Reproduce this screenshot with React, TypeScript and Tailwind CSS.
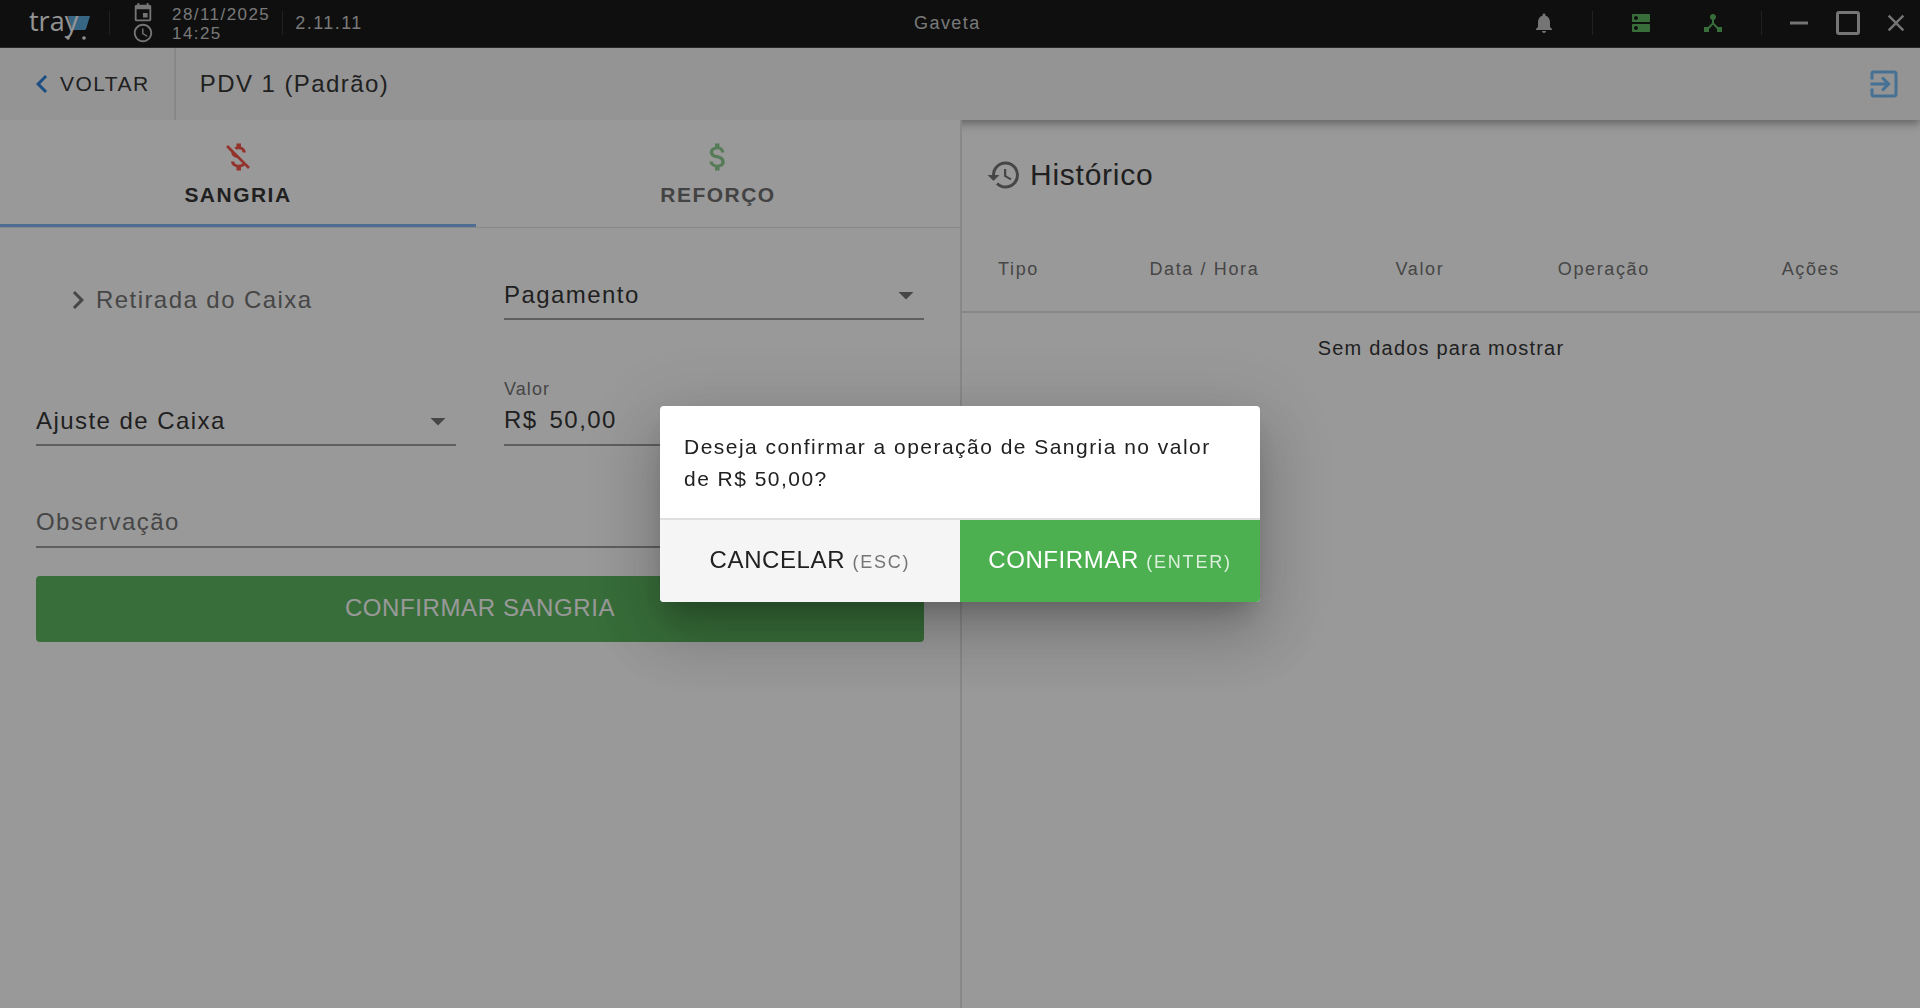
import React, { useState } from "react";
import {
  MdAccessTime,
  MdArrowDropDown,
  MdAttachMoney,
  MdChevronLeft,
  MdChevronRight,
  MdClose,
  MdDns,
  MdEvent,
  MdExitToApp,
  MdHistory,
  MdMoneyOff,
  MdNotifications,
} from "react-icons/md";

type Column = {
  label: string;
  width: string;
};

const columns: Column[] = [
  { label: "Tipo", width: "w-[11.8%]" },
  { label: "Data / Hora", width: "w-[27%]" },
  { label: "Valor", width: "w-[18%]" },
  { label: "Operação", width: "w-[20.4%]" },
  { label: "Ações", width: "w-[22.8%]" },
];

function Logo() {
  return (
    <svg width="62" height="40" viewBox="0 0 62 40" role="img" aria-label="tray" className="tracking-normal">
      <path d="M39 13h22l-3.800 12.500q-.5 1.500-2 1.500H43z" fill="#4a9fd8" />
      <text x="0" y="28" fontSize="27" fontWeight="500" fontFamily='"Open Sans", sans-serif' fill="#f5f5f5">
        tray
      </text>
      <circle cx="39" cy="35" r="1.800" fill="#f5f5f5" />
      <circle cx="55" cy="35" r="1.800" fill="#f5f5f5" />
    </svg>
  );
}

function NetworkIcon() {
  return (
    <svg width="24" height="24" viewBox="0 0 24 24" fill="#4caf50">
      <path d="M17 16l-4-4V8.820C14.160 8.400 15 7.300 15 6c0-1.660-1.340-3-3-3S9 4.340 9 6c0 1.300.84 2.400 2 2.820V12l-4 4H3v5h5v-3.050l4-4.200 4 4.200V21h5v-5h-4z" />
    </svg>
  );
}

function TopBar() {
  return (
    <div className="flex h-12 items-center justify-between border-b border-[#333] bg-black pb-0.5 text-lg tracking-[0.08em] text-[#c4c4c4]">
      <div className="flex items-center pl-[29px]">
        <Logo />
        <div className="ml-[18px] h-6 w-px bg-[#222]" />
        <div className="ml-[22px] flex flex-col text-[#bdbdbd]">
          <MdEvent size={22} />
          <MdAccessTime size={22} className="-mt-0.5" />
        </div>
        <div className="ml-[18px] flex flex-col pt-0.5 text-[17px] leading-[19px]">
          <span>28/11/2025</span>
          <span>14:25</span>
        </div>
        <div className="ml-3 h-6 w-px bg-[#222]" />
        <span className="ml-3">2.11.11</span>
      </div>
      <h1>Gaveta</h1>
      <div className="flex items-center pr-2.5 text-[#bdbdbd]">
        <button aria-label="Notificações">
          <MdNotifications size={24} />
        </button>
        <div className="ml-9 h-6 w-px bg-[#222]" />
        <MdDns size={24} className="ml-9 text-[#4caf50]" />
        <div className="ml-12">
          <NetworkIcon />
        </div>
        <div className="ml-9 h-6 w-px bg-[#222]" />
        <button aria-label="Minimizar" className="ml-7">
          <svg width="18" height="24" viewBox="0 0 18 24">
            <path d="M0 12h18" stroke="currentColor" strokeWidth="3" />
          </svg>
        </button>
        <button aria-label="Maximizar" className="ml-7">
          <svg width="24" height="24" viewBox="0 0 24 24" fill="none">
            <rect x="1.500" y="1.500" width="21" height="21" rx="1.500" stroke="currentColor" strokeWidth="3" />
          </svg>
        </button>
        <button aria-label="Fechar" className="ml-[22px]">
          <MdClose size={28} />
        </button>
      </div>
    </div>
  );
}

function Header() {
  return (
    <header className="flex h-[72px] items-center bg-[#f5f5f5] shadow-[0_3px_6px_-1px_rgba(0,0,0,0.2),0_6px_8px_0_rgba(0,0,0,0.14),0_1px_15px_0_rgba(0,0,0,0.12)]">
      <button className="flex h-full items-center border-r-2 border-[#e0e0e0] pr-6 pl-6 text-[21px] tracking-[0.07em]">
        <MdChevronLeft size={36} className="text-[#1976d2]" />
        VOLTAR
      </button>
      <h2 className="pl-6 text-2xl tracking-[0.06em]">PDV 1 (Padrão)</h2>
      <button aria-label="Sair" className="mr-[18px] ml-auto">
        <MdExitToApp size={36} className="text-[#64b5f6]" />
      </button>
    </header>
  );
}

function SelectField({ label, options }: { label: string; options: string[] }) {
  return (
    <div className="flex h-12 items-center border-b-2 border-[#949494]">
      <select aria-label={label} className="w-full appearance-none bg-transparent text-2xl tracking-[0.06em]">
        {options.map((option) => (
          <option key={option}>{option}</option>
        ))}
      </select>
      <MdArrowDropDown size={36} className="pointer-events-none -ml-9 text-[#666]" />
    </div>
  );
}

function OperationForm() {
  return (
    <form className="px-9" onSubmit={(e) => e.preventDefault()}>
      <div className="grid grid-cols-2 gap-x-12">
        <div className="mt-[54px] flex h-9 items-center pl-6 text-2xl tracking-[0.06em] text-[#666]">
          <MdChevronRight size={36} />
          Retirada do Caixa
        </div>
        <div className="mt-11">
          <SelectField label="Forma" options={["Pagamento", "Dinheiro"]} />
        </div>
        <div className="mt-[78px]">
          <SelectField label="Motivo" options={["Ajuste de Caixa", "Outros"]} />
        </div>
        <div className="mt-[57px] flex h-[69px] flex-col border-b-2 border-[#949494]">
          <label htmlFor="valor" className="text-lg leading-6 tracking-[0.06em] text-[#666]">
            Valor
          </label>
          <div className="flex h-[38px] items-center gap-3 text-2xl tracking-[0.06em]">
            <span>R$</span>
            <input id="valor" defaultValue="50,00" className="w-full min-w-0 outline-none" />
          </div>
        </div>
      </div>
      <input
        aria-label="Observação"
        placeholder="Observação"
        className="mt-[54px] h-12 w-full border-b-2 border-[#949494] pb-0.5 text-2xl tracking-[0.06em] outline-none placeholder:text-[#666]"
      />
      <button className="mt-7 h-[66px] w-full rounded-sm bg-[#4caf50] pb-0.5 text-2xl tracking-wide text-white">
        CONFIRMAR SANGRIA
      </button>
    </form>
  );
}

function History() {
  return (
    <section>
      <h2 className="flex items-center gap-2 pt-[37px] pl-6 text-[30px] leading-9 tracking-wide">
        <MdHistory size={36} className="text-[#666]" />
        Histórico
      </h2>
      <table className="mt-8 w-full table-fixed">
        <thead>
          <tr className="h-[87px] border-b-2 border-[#e0e0e0]">
            {columns.map((column) => (
              <th key={column.label} className={`${column.width} pt-0.5 text-lg font-normal tracking-[0.09em] text-[#666]`}>
                {column.label}
              </th>
            ))}
          </tr>
        </thead>
        <tbody>
          <tr className="h-[70px]">
            <td colSpan={5} className="text-center text-xl tracking-[0.06em]">
              Sem dados para mostrar
            </td>
          </tr>
        </tbody>
      </table>
    </section>
  );
}

function ConfirmDialog() {
  return (
    <div className="fixed inset-0 z-20 flex items-center justify-center bg-[#212121]/46">
      <div
        role="dialog"
        aria-modal="true"
        className="w-[600px] overflow-hidden rounded-sm bg-white shadow-[0_16px_22px_-10px_rgba(0,0,0,0.2),0_36px_57px_4px_rgba(0,0,0,0.14),0_14px_69px_12px_rgba(0,0,0,0.12)]"
      >
        <p className="px-6 pt-[25px] pb-[23px] text-[21px] leading-8 tracking-[0.07em]">
          Deseja confirmar a operação de Sangria no valor de R$ 50,00?
        </p>
        <div className="grid h-[84px] grid-cols-2 border-t-2 border-[#e0e0e0] text-2xl tracking-wide">
          <button className="bg-[#f5f5f5] pb-0.5">
            CANCELAR <small className="text-lg tracking-widest text-[#757575]">(ESC)</small>
          </button>
          <button className="bg-[#4caf50] pb-0.5 text-white">
            CONFIRMAR <small className="text-lg tracking-widest text-white/80">(ENTER)</small>
          </button>
        </div>
      </div>
    </div>
  );
}

export default function App() {
  const [tab, setTab] = useState("sangria");

  return (
    <div className="flex min-h-screen flex-col bg-white font-['Liberation_Sans',Arial,sans-serif] text-[#212121]">
      <TopBar />
      <Header />
      <main className="grid flex-1 grid-cols-2">
        <div className="relative z-10 bg-white">
          <div role="tablist" className="flex h-[108px] border-b border-[#e0e0e0] text-[21px] font-bold tracking-[0.07em]">
            <button
              role="tab"
              aria-selected={tab === "sangria"}
              onClick={() => setTab("sangria")}
              className="flex flex-auto flex-col items-center justify-center gap-1 border-b-3 border-[#74aef5] pt-1.5"
            >
              <MdMoneyOff size={36} className="text-[#f44336]" />
              SANGRIA
            </button>
            <button
              role="tab"
              aria-selected={tab === "reforco"}
              onClick={() => setTab("reforco")}
              className="flex flex-auto flex-col items-center justify-center gap-1 border-b-3 border-transparent pt-1.5 text-[#616161]"
            >
              <MdAttachMoney size={36} className="text-[#82c785]" />
              REFORÇO
            </button>
          </div>
          <OperationForm />
        </div>
        <div className="border-l-2 border-[#e0e0e0]">
          <History />
        </div>
      </main>
      <ConfirmDialog />
    </div>
  );
}
